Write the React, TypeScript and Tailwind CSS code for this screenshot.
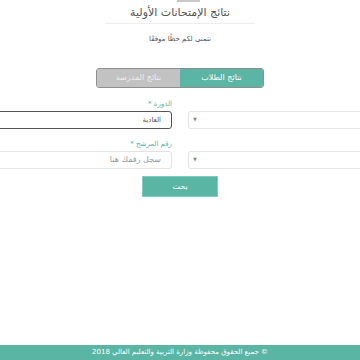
import React from 'react';

const TEAL = 'bg-[#5bb5a4]';

function Field({ label, children }: { label: string; children: React.ReactNode }) {
  return (
    <div className="flex flex-col">
      <div className="flex justify-center gap-4">
        <div className="w-[200px]" />
        <label className="w-[200px] text-right text-[7px] leading-[10px] text-[#5bb5a4]">
          {label} <span>*</span>
        </label>
      </div>
      <div className="mt-[2px] flex justify-center gap-4">
        <div className="w-[200px] h-[18px] shrink-0 flex items-center justify-end rounded-[3px] border border-[#e3e3e3] bg-white pl-[4px]">
          <span className="text-[5px] text-[#888]">▼</span>
        </div>
        {children}
      </div>
    </div>
  );
}

export default function App() {
  return (
    <div
      dir="rtl"
      className="relative w-[360px] h-[360px] overflow-hidden bg-white"
      style={{ fontFamily: '"DejaVu Sans", "Noto Sans", sans-serif' }}
    >
      <div dir="ltr" className="flex justify-center">
        <div className="ml-[16px] w-[23px] h-[2px] bg-[#c8c8c8]" />
      </div>

      <div className="flex flex-col items-center">
        <h1 className="mt-[3px] text-[11px] leading-[16px] text-[#555] font-normal">نتائج الإمتحانات الأولية</h1>
        <div className="mt-[2px] w-[150px] h-px bg-[#eeeeee]" />
        <p className="mt-[10px] text-[7px] leading-[10px] text-[#555]">نتمنى لكم حظًا موفقًا</p>

        <div className="mt-[24px] flex w-[168px] h-[20px] rounded-[3px] border border-[#8f8f8f] overflow-hidden">
          <div className={`flex-1 flex items-center justify-center ${TEAL} text-white text-[8px]`}>نتائج الطلاب</div>
          <div className="flex-1 flex items-center justify-center bg-[#c2c2c2] text-[#eeeeee] text-[8px]">نتائج المدرسة</div>
        </div>
      </div>

      <div className="mt-[11px] flex flex-col gap-[10px]">
        <Field label="الدورة">
          <div className="w-[200px] h-[18px] shrink-0 flex items-center rounded-[3px] border border-[#555] bg-white pr-[10px]">
            <span className="text-[7px] text-[#555]">العادية</span>
          </div>
        </Field>
        <Field label="رقم المرشح">
          <div className="w-[200px] h-[18px] shrink-0 flex items-center rounded-[3px] border border-[#e3e3e3] bg-white pr-[10px]">
            <span className="text-[8px] text-[#999]">سجل رقمك هنا</span>
          </div>
        </Field>
      </div>

      <div className="mt-[7px] flex justify-center">
        <button className={`w-[76px] h-[21px] ${TEAL} text-white text-[8px] border border-[#7fcbbd]`}>بحث</button>
      </div>

      <footer className={`absolute bottom-0 left-0 right-0 h-[15px] ${TEAL} flex items-center justify-center text-white text-[7px]`}>
        © جميع الحقوق محفوظة وزارة التربية والتعليم العالي 2018
      </footer>
    </div>
  );
}
